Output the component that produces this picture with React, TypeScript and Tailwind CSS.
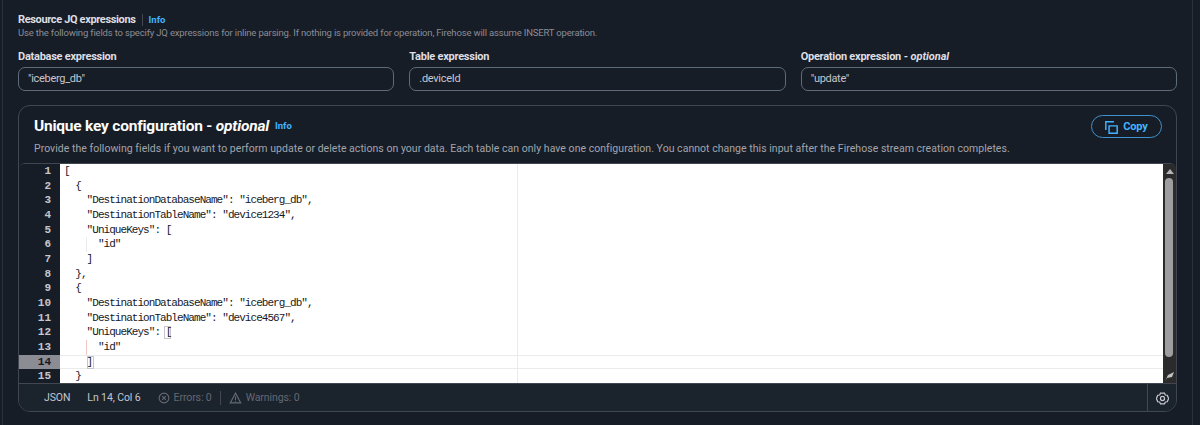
import React from 'react';

const sans = "font-['Roboto','Liberation_Sans',sans-serif]";

const lines = [
  '[',
  '  {',
  '    "DestinationDatabaseName": "iceberg_db",',
  '    "DestinationTableName": "device1234",',
  '    "UniqueKeys": [',
  '      "id"',
  '    ]',
  '  },',
  '  {',
  '    "DestinationDatabaseName": "iceberg_db",',
  '    "DestinationTableName": "device4567",',
  '    "UniqueKeys": [',
  '      "id"',
  '    ]',
  '  }',
];

function Field({ label, optional, value }: { label: string; optional?: boolean; value: string }) {
  return (
    <div className="flex flex-col">
      <div className="h-[21px] text-[11px] leading-[21px] font-bold tracking-[-0.25px] text-[#dedee3]">
        {label}
        {optional && <span className="italic tracking-[-0.05px]"> - optional</span>}
      </div>
      <div className="flex h-[24px] items-center rounded-[7px] border border-[#5f6b7a] pl-[9px] text-[11px] tracking-[-0.3px] text-[#c6c6cd]">
        {value}
      </div>
    </div>
  );
}

function CodeLine({ n, text }: { n: number; text: string }) {
  const active = n === 14;
  return (
    <div className={`relative flex h-[14.67px] leading-[14.67px] ${active ? 'bg-white' : ''}`}>
      <div className={`w-[41px] shrink-0 pr-[9px] text-right font-bold ${active ? 'bg-[#8c8c94] text-[#16191f]' : 'bg-[#161d26] text-[#c6c6cd]'}`}>
        {n}
      </div>
      <div className="relative flex-1 overflow-hidden whitespace-pre bg-white pl-[4px] tracking-[-0.95px] text-[#16191f]">
        {active && <div className="absolute inset-0 border-y border-[#e9ebed]" />}
        {(n === 6 || n === 13) && (
          <div className={`absolute top-0 left-[26px] h-full w-px ${n === 13 ? 'bg-[#f3c6c6]' : 'bg-[#e9ebed]'}`} />
        )}
        {n === 12 && <div className="absolute top-[1px] left-[104px] h-[13px] w-[7px] border border-[#c6c6cd]" />}
        {n === 14 && <div className="absolute top-[1px] left-[27px] h-[13px] w-[7px] border border-[#c6c6cd]" />}
        <span className="relative">{text}</span>
      </div>
    </div>
  );
}

export default function App() {
  return (
    <div className={`h-[425px] w-[1200px] overflow-hidden bg-[#161d26] ${sans}`}>
      <div className="mx-[2px] h-full w-[1191px] border-x border-[#2a313c] pt-[13px] pr-[15px] pl-[15px]">
        <div className="flex h-[14px] items-center text-[11px] leading-[14px] font-bold tracking-[-0.35px] text-[#dedee3]">
          Resource JQ expressions
          <span className="mx-[6px] h-[12px] w-px bg-[#424650]" />
          <span className="text-[9.5px] tracking-normal text-[#42b4ff]">Info</span>
        </div>
        <p className="-mt-[1px] h-[13px] text-[9.5px] leading-[13px] tracking-[-0.17px] text-[#8c8c94]">
          Use the following fields to specify JQ expressions for inline parsing. If nothing is provided for operation, Firehose will assume INSERT operation.
        </p>
        <div className="mt-[7px] grid grid-cols-3 gap-x-[15px]">
          <Field label="Database expression" value={'"iceberg_db"'} />
          <Field label="Table expression" value=".deviceId" />
          <Field label="Operation expression" optional value={'"update"'} />
        </div>
        <section className="mt-[14px] h-[307px] overflow-hidden rounded-[12px] border border-[#424650]">
          <div className="flex h-[57px] justify-between pr-[14px] pl-[15px]">
            <div>
              <div className="mt-[10px] flex h-[21px] items-center">
                <h2 className="text-[15.5px] font-bold tracking-[-0.22px] text-[#fbfbfb]">
                  Unique key configuration - <span className="italic">optional</span>
                </h2>
                <span className="ml-[6px] text-[9.5px] font-bold text-[#42b4ff]">Info</span>
              </div>
              <p className="mt-[5px] text-[10.5px] leading-[14px] tracking-[0.035px] whitespace-nowrap text-[#a4a4ad]">
                Provide the following fields if you want to perform update or delete actions on your data. Each table can only have one configuration. You cannot change this input after the Firehose stream creation completes.
              </p>
            </div>
            <button className="mt-[9px] flex h-[23px] w-[71px] items-center justify-center gap-[5px] rounded-full border border-[#3d93d1] pt-px text-[11px] font-bold tracking-[-0.2px] text-[#42b4ff]">
              <svg width="13" height="13" viewBox="0 0 16 16" fill="none" stroke="currentColor" strokeWidth="1.8">
                <path d="M5 6h10v9H5z" />
                <path d="M1 11V1h10" />
              </svg>
              Copy
            </button>
          </div>
          <div className="relative flex h-[220px] overflow-hidden rounded-t-[6px] border-t border-[#424650]">
            <div className="min-w-0 flex-1 font-['Liberation_Mono',monospace] text-[11px]">
              {lines.map((text, i) => (
                <CodeLine key={i} n={i + 1} text={text} />
              ))}
            </div>
            <div className="absolute top-0 bottom-0 left-[498px] w-px bg-[#e9ebed]" />
            <div className="relative w-[13px] shrink-0 bg-[#2b2b2b]">
              <div className="absolute top-[5px] left-[3px] h-0 w-0 border-x-[4px] border-b-[5px] border-x-transparent border-b-[#b5b5b5]" />
              <div className="absolute top-[14px] bottom-[26px] left-[2px] w-[8px] rounded-full bg-[#9e9e9e]" />
              <svg className="absolute bottom-[2px] left-[2px]" width="9" height="9" viewBox="0 0 9 9">
                <path d="M0 9L3 3 9 0 7 5 2 6z" fill="#c2c2c2" />
              </svg>
            </div>
          </div>
          <div className="flex h-[29px] items-center border-t border-[#424650] bg-[#1b232d] text-[10.5px] tracking-[-0.1px]">
            <span className="ml-[25px] text-[#c6c6cd]">JSON</span>
            <span className="ml-[17px] text-[#c6c6cd]">Ln 14, Col 6</span>
            <span className="ml-[17px] flex items-center gap-[4px] text-[#656871]">
              <svg width="12" height="12" viewBox="0 0 16 16" fill="none" stroke="currentColor" strokeWidth="1.5">
                <circle cx="8" cy="8" r="6.5" />
                <path d="M5.5 5.5l5 5M10.5 5.5l-5 5" />
              </svg>
              Errors: 0
            </span>
            <span className="mx-[8px] h-[14px] w-px bg-[#424650]" />
            <span className="flex items-center gap-[4px] text-[#656871]">
              <svg width="13" height="12" viewBox="0 0 16 16" fill="none" stroke="currentColor" strokeWidth="1.5">
                <path d="M8 1.5L15 14.5H1z" />
                <path d="M8 6v4.5M8 11.5v1.5" />
              </svg>
              Warnings: 0
            </span>
            <div className="ml-auto flex h-full w-[29px] items-center justify-center border-l border-[#424650] text-[#c6c6cd]">
              <svg width="13" height="13" viewBox="0 0 16 16" fill="none" stroke="currentColor" strokeWidth="1.5">
                <path d="M5.5 1.5h5l1 2.2 2.4.3 1.6 4-1.6 4-2.4.3-1 2.2h-5l-1-2.2-2.4-.3L.5 8l1.6-4 2.4-.3z" />
                <circle cx="8" cy="8" r="2.5" />
              </svg>
            </div>
          </div>
        </section>
      </div>
    </div>
  );
}
